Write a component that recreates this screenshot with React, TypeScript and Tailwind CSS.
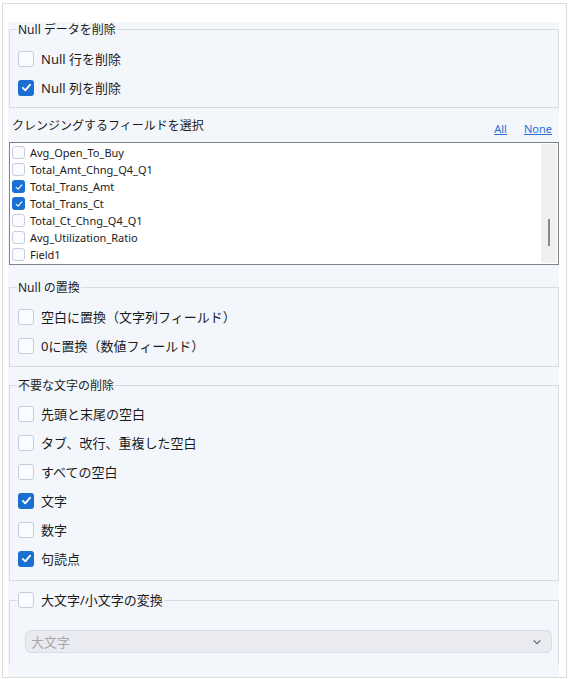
import React, { useState } from 'react';

const FONT = { fontFamily: '"Noto Sans", "Noto Sans CJK JP", sans-serif' };

function Check({ checked, size = 'md' }: { checked: boolean; size?: 'md' | 'sm' }) {
    const box = size === 'md' ? 'w-4 h-4 rounded-[3px]' : 'w-[13px] h-[13px] rounded-[3px]';
    if (checked) {
        return (
            <span className={`${box} flex-shrink-0 flex items-center justify-center bg-[#1b6fd2]`}>
                <svg viewBox="0 0 16 16" className={size === 'md' ? 'w-[13px] h-[13px]' : 'w-[10px] h-[10px]'} fill="none">
                    <path d="M3.5 8.5l3 3 6-7" stroke="white" strokeWidth={size === 'md' ? 2.2 : 1.8} strokeLinecap="round" strokeLinejoin="round" />
                </svg>
            </span>
        );
    }
    return <span className={`${box} flex-shrink-0 border border-[#c6cce0] bg-[#fbfcff]`} />;
}

function Row({ label, checked }: { label: string; checked: boolean }) {
    return (
        <div className="h-[29px] flex items-center gap-[7px] pl-[8px]">
            <Check checked={checked} />
            <span className="text-[13px] leading-[16px] text-[#1b1b1b]">{label}</span>
        </div>
    );
}

// fieldset with a text legend; pad = inner padding classes
function Group({ title, pad, children }: { title: React.ReactNode; pad: string; children: React.ReactNode }) {
    return (
        <fieldset className="border border-[#d9dbe0] p-0 min-w-0">
            <legend className="ml-[7px] px-[1px] text-[12px] leading-[15px] text-[#1b1b1b]">{title}</legend>
            <div className={pad}>{children}</div>
        </fieldset>
    );
}

const fields = [
    { name: 'Avg_Open_To_Buy', on: false },
    { name: 'Total_Amt_Chng_Q4_Q1', on: false },
    { name: 'Total_Trans_Amt', on: true },
    { name: 'Total_Trans_Ct', on: true },
    { name: 'Total_Ct_Chng_Q4_Q1', on: false },
    { name: 'Avg_Utilization_Ratio', on: false },
    { name: 'Field1', on: false },
];

export default function App() {
    const [mode] = useState('大文字');

    return (
        <div style={FONT} className="w-[568px] h-[679px] bg-white pt-[3px] pl-[2px]">
            <div className="w-[565px] h-[675px] border border-[#dcdcdc] bg-white pt-[18px] pl-[5px] pr-[7px] overflow-hidden">
                <div className="h-[655px] bg-[#f3f7fc] flex flex-col">
                    <div className="h-[643px] overflow-hidden pl-[1px]">
                        <Group title="Null データを削除" pad="pt-[7px] pb-[5px]">
                            <Row label="Null  行を削除" checked={false} />
                            <Row label="Null  列を削除" checked={true} />
                        </Group>

                        <div className="mt-[8px] h-[20px] flex items-center pl-[3px] pr-[7px]">
                            <span className="text-[12px] leading-[20px] text-[#1b1b1b]">クレンジングするフィールドを選択</span>
                            <div className="ml-auto flex gap-[17px] mt-[6px] text-[11px] leading-[14px] text-[#2a6fd4]">
                                <span className="underline">All</span>
                                <span className="underline">None</span>
                            </div>
                        </div>

                        <div className="mt-[6px] h-[123px] border border-[#80848c] bg-white flex">
                            <div className="flex-1 pt-[1px] pl-[2px]">
                                {fields.map(f => (
                                    <div key={f.name} className="h-[17px] flex items-center gap-[5px]">
                                        <Check checked={f.on} size="sm" />
                                        <span className="text-[11px] leading-[14px] text-[#1b1b1b]">{f.name}</span>
                                    </div>
                                ))}
                            </div>
                            <div className="w-[16px] my-[1px] mr-[1px] bg-[#f0f0f0] flex flex-col items-center pt-[75px]">
                                <div className="w-[2px] h-[27px] bg-[#8a8a8a]" />
                            </div>
                        </div>

                        <div className="mt-[15px]">
                            <Group title="Null の置換" pad="pt-[7px] pb-[6px]">
                                <Row label="空白に置換（文字列フィールド）" checked={false} />
                                <Row label="0に置換（数値フィールド）" checked={false} />
                            </Group>
                        </div>

                        <div className="mt-[11px]">
                            <Group title="不要な文字の削除" pad="pt-[6px] pb-[7px]">
                                <Row label="先頭と末尾の空白" checked={false} />
                                <Row label="タブ、改行、重複した空白" checked={false} />
                                <Row label="すべての空白" checked={false} />
                                <Row label="文字" checked={true} />
                                <Row label="数字" checked={false} />
                                <Row label="句読点" checked={true} />
                            </Group>
                        </div>

                        <fieldset className="mt-[11px] border border-[#d9dbe0] p-0 min-w-0">
                            <legend className="ml-[7px] px-[1px] h-[16px]">
                                <span className="flex items-center gap-[7px]">
                                    <Check checked={false} />
                                    <span className="text-[13px] leading-[16px] text-[#1b1b1b]">大文字/小文字の変換</span>
                                </span>
                            </legend>
                            <div className="pt-[22px] pb-[20px] pl-[15px] pr-[6px]">
                                <div className="h-[23px] rounded-[6px] border border-[#d5dceb] bg-[#e9ebf0] flex items-center pl-[5px] pr-[9px]">
                                    <span className="text-[13px] leading-[16px] text-[#a8a8a8]">{mode}</span>
                                    <svg viewBox="0 0 12 12" className="ml-auto w-[10px] h-[10px]" fill="none">
                                        <path d="M2.5 4.5L6 8l3.5-3.5" stroke="#6b7890" strokeWidth={1.6} strokeLinecap="round" strokeLinejoin="round" />
                                    </svg>
                                </div>
                            </div>
                        </fieldset>
                    </div>
                </div>
            </div>
        </div>
    );
}
